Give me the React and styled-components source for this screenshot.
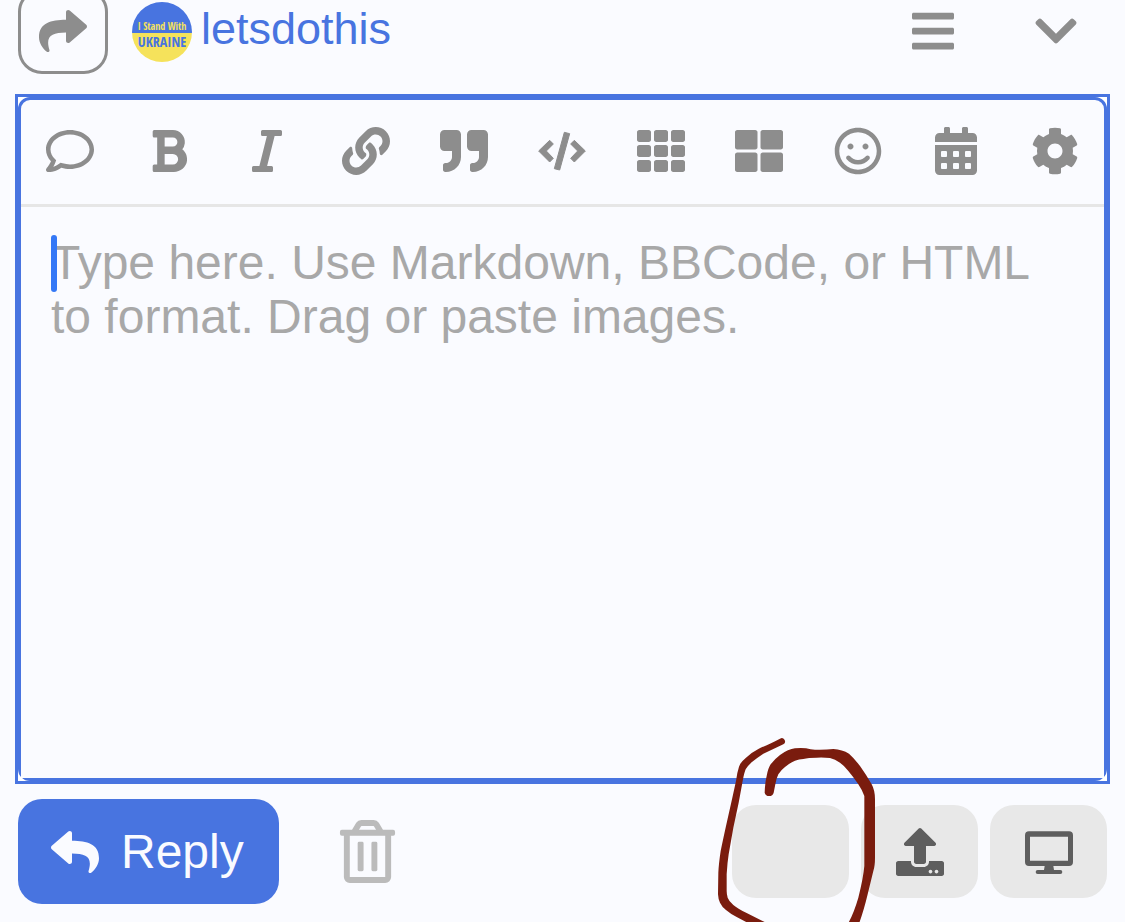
import React, { useState } from "react";
import styled, { createGlobalStyle } from "styled-components";
import {
  FaShare,
  FaReply,
  FaBars,
  FaChevronDown,
  FaRegComment,
  FaBold,
  FaItalic,
  FaLink,
  FaQuoteRight,
  FaTh,
  FaThLarge,
  FaRegSmile,
  FaCalendarAlt,
  FaCog,
  FaRegTrashAlt,
  FaUpload,
} from "react-icons/fa";

const CodeIcon = () => (
  <svg
    viewBox="0 0 144 144"
    fill="currentColor"
    stroke="currentColor"
    strokeWidth="3"
    strokeLinejoin="round"
    aria-hidden="true"
  >
    <path d="M35 40 L2 72 L35 105 L46 94 L25 72 L46 51 Z" />
    <path d="M109 40 L142 72 L109 105 L98 94 L119 72 L98 51 Z" />
    <path d="M79 16 L95 20 L65 129 L49 125 Z" />
  </svg>
);

const DesktopIcon = () => (
  <svg viewBox="0 0 144 144" fill="currentColor" aria-hidden="true">
    <path
      fillRule="evenodd"
      d="M12 10H132a12 12 0 0 1 12 12V102a12 12 0 0 1-12 12H85l2 12h19a6 6 0 0 1 0 12H38a6 6 0 0 1 0-12h19l2-12H12a12 12 0 0 1-12-12V22a12 12 0 0 1 12-12ZM15 26V98H129V26Z"
    />
  </svg>
);

const tools = [
  { label: "Toggle reply type", icon: <FaRegComment /> },
  { label: "Bold", icon: <FaBold /> },
  { label: "Italic", icon: <FaItalic /> },
  { label: "Link", icon: <FaLink /> },
  { label: "Quote", icon: <FaQuoteRight /> },
  { label: "Code", icon: <CodeIcon /> },
  { label: "Small grid", icon: <FaTh /> },
  { label: "Large grid", icon: <FaThLarge /> },
  { label: "Emoji", icon: <FaRegSmile /> },
  { label: "Date", icon: <FaCalendarAlt /> },
  { label: "Options", icon: <FaCog /> },
];

const App = () => {
  const [text, setText] = useState("");

  return (
    <>
      <GlobalStyle />
      <Composer>
        <Header>
          <ShareButton aria-label="Reply options">
            <FaShare />
          </ShareButton>
          <UserLink href="#letsdothis">
            <Avatar viewBox="0 0 60 60" aria-hidden="true">
              <clipPath id="round">
                <circle cx="30" cy="30" r="30" />
              </clipPath>
              <g clipPath="url(#round)">
                <rect width="60" height="31" fill="#4874e0" />
                <rect y="31" width="60" height="29" fill="#f5e25b" />
              </g>
              <text x="30" y="28" fontSize="10" fill="#f5e25b">
                I Stand With
              </text>
              <text x="30" y="45" fontSize="14" fill="#4874e0">
                UKRAINE
              </text>
            </Avatar>
            <UserName>letsdothis</UserName>
          </UserLink>
          <HeaderActions>
            <IconButton aria-label="Menu">
              <FaBars />
            </IconButton>
            <IconButton aria-label="Collapse">
              <FaChevronDown />
            </IconButton>
          </HeaderActions>
        </Header>

        <EditorFocus>
          <Editor>
            <Toolbar>
              {tools.map((tool) => (
                <IconButton key={tool.label} aria-label={tool.label}>
                  {tool.icon}
                </IconButton>
              ))}
            </Toolbar>
            <Field>
              {!text && <Caret />}
              <TextBox
                aria-label="Reply text"
                value={text}
                onChange={(e) => setText(e.target.value)}
                placeholder="Type here. Use Markdown, BBCode, or HTML to format. Drag or paste images."
              />
            </Field>
          </Editor>
        </EditorFocus>

        <Footer>
          <ReplyButton>
            <FaReply />
            Reply
          </ReplyButton>
          <DiscardButton aria-label="Discard">
            <FaRegTrashAlt />
          </DiscardButton>
          <FooterTools>
            <ToolSlot>
              <SquareButton aria-label="Empty" />
              <Scribble viewBox="0 0 600 606" aria-hidden="true">
                <path d="M240 53 C215 66 195 74 175 84 Q152 96 138 110 Q120 125 117 137 Q111 155 108 180 L96 235 L78 315 Q66 370 62 390 Q56 430 55 455 L54 520 Q55 537 60 545 Q66 558 78 567 Q92 579 110 588 L148 608 L204 608 L140 576 Q112 563 100 552 Q87 541 83 530 Q80 520 80 510 L80 460 Q82 425 86 400 L100 320 L116 245 L128 180 Q132 157 137 145 Q143 135 155 124 Q170 111 190 98 L250 70 A9 9 0 0 0 240 53 Z" />
                <path d="M194 215 Q195 185 200 165 Q204 142 212 130 Q223 115 240 102 Q265 84 285 82 Q303 80 318 82 Q332 86 345 86 Q375 87 400 84 Q427 86 447 98 Q462 111 480 135 Q500 163 515 190 Q525 208 525 235 L525 410 Q525 435 520 450 L503 520 Q491 570 477 608 L444 608 Q462 575 475 530 Q490 470 493 435 L493 225 Q487 208 475 190 Q461 169 445 150 Q432 133 420 125 Q405 114 390 111 Q370 109 350 110 Q325 110 310 114 Q297 114 285 119 Q269 126 255 138 Q242 148 235 160 Q228 175 226 190 L221 215 A14 14 0 0 1 194 215 Z" />
              </Scribble>
            </ToolSlot>
            <SquareButton aria-label="Upload">
              <FaUpload />
            </SquareButton>
            <SquareButton aria-label="Preview">
              <DesktopIcon />
            </SquareButton>
          </FooterTools>
        </Footer>
      </Composer>
    </>
  );
};

const GlobalStyle = createGlobalStyle`
  * {
    box-sizing: border-box;
  }

  body {
    margin: 0;
    background: #fafbff;
    font-family: "Liberation Sans", Arial, sans-serif;
    overflow: hidden;
  }

  button,
  textarea {
    font-family: inherit;
    margin: 0;
    padding: 0;
    border: none;
    background: none;
  }

  button {
    cursor: pointer;
  }
`;

const Composer = styled.main`
  display: flex;
  flex-direction: column;
  height: 100vh;
  padding: 0 15px 18px;
`;

const Header = styled.header`
  display: flex;
  align-items: center;
  margin-top: -12px;
  padding: 0 3px;
`;

const ShareButton = styled.button`
  display: flex;
  align-items: center;
  justify-content: center;
  width: 90px;
  height: 86px;
  border: 3px solid #8d8d8d;
  border-radius: 24px;
  color: #8d8d8d;

  svg {
    width: 48px;
    height: 48px;
  }
`;

const UserLink = styled.a`
  display: flex;
  align-items: center;
  gap: 9px;
  margin-left: 24px;
  color: #4874e0;
  font-size: 45px;
  line-height: 54px;
  text-decoration: none;
`;

const Avatar = styled.svg`
  width: 60px;
  height: 60px;
  margin-top: 2px;

  text {
    font-family: "Open Sans Condensed", "Roboto Condensed",
      "Liberation Sans Narrow", "Liberation Sans", sans-serif;
    font-weight: 700;
    text-anchor: middle;
  }
`;

const UserName = styled.span`
  padding-bottom: 4px;
`;

const HeaderActions = styled.div`
  display: flex;
  gap: 75px;
  margin-left: auto;
  padding-right: 27px;
`;

const IconButton = styled.button`
  display: flex;
  align-items: center;
  justify-content: center;
  min-width: 48px;
  color: #8d8d8d;

  svg {
    width: 48px;
    height: 48px;
  }
`;

/* square focus ring round the rounded editor */
const EditorFocus = styled.div`
  display: flex;
  flex: 1;
  margin-top: 20px;
  border: 3px solid #4874e0;
  background: #fff;
`;

const Editor = styled.section`
  display: flex;
  flex: 1;
  flex-direction: column;
  border: 3px solid #4874e0;
  border-radius: 12px;
  background: #fafbff;
`;

const Toolbar = styled.div`
  display: grid;
  grid-template-columns: repeat(11, 1fr);
  height: 107px;
  padding-bottom: 2px;
  border-bottom: 3px solid #e6e6e6;
`;

const Field = styled.div`
  position: relative;
  display: flex;
  flex: 1;
  background: #fafbff;
`;

const TextBox = styled.textarea`
  flex: 1;
  padding: 29px 30px;
  color: #222;
  font-size: 48px;
  line-height: 54px;
  resize: none;
  outline: none;

  &::placeholder {
    color: #a8a8a8;
    opacity: 1;
  }
`;

const Caret = styled.span`
  position: absolute;
  top: 28px;
  left: 30px;
  width: 6px;
  height: 57px;
  border-radius: 3px;
  background: #3478f6;
`;

const Footer = styled.footer`
  display: flex;
  align-items: center;
  margin-top: 15px;
  padding: 0 3px;
`;

const ReplyButton = styled.button`
  display: flex;
  align-items: center;
  justify-content: center;
  gap: 22px;
  height: 105px;
  padding: 0 35px 0 33px;
  border-radius: 24px;
  background: #4874e0;
  color: #fafbff;
  font-size: 48px;

  svg {
    width: 48px;
    height: 48px;
  }
`;

const DiscardButton = styled.button`
  display: flex;
  margin-left: 57px;
  color: #bbb;

  svg {
    width: 63px;
    height: 63px;
  }
`;

const FooterTools = styled.div`
  display: flex;
  gap: 12px;
  margin-left: auto;
`;

const ToolSlot = styled.div`
  position: relative;
`;

const SquareButton = styled.button`
  display: flex;
  align-items: center;
  justify-content: center;
  width: 117px;
  height: 93px;
  border-radius: 24px;
  background: #e8e8e8;
  color: #5e5e5e;

  svg {
    width: 48px;
    height: 48px;
  }
`;

const Scribble = styled.svg`
  position: absolute;
  z-index: 1;
  top: -84px;
  left: -32px;
  width: 200px;
  height: 202px;
  fill: #7a1c0e;
  pointer-events: none;
`;

export default App;
